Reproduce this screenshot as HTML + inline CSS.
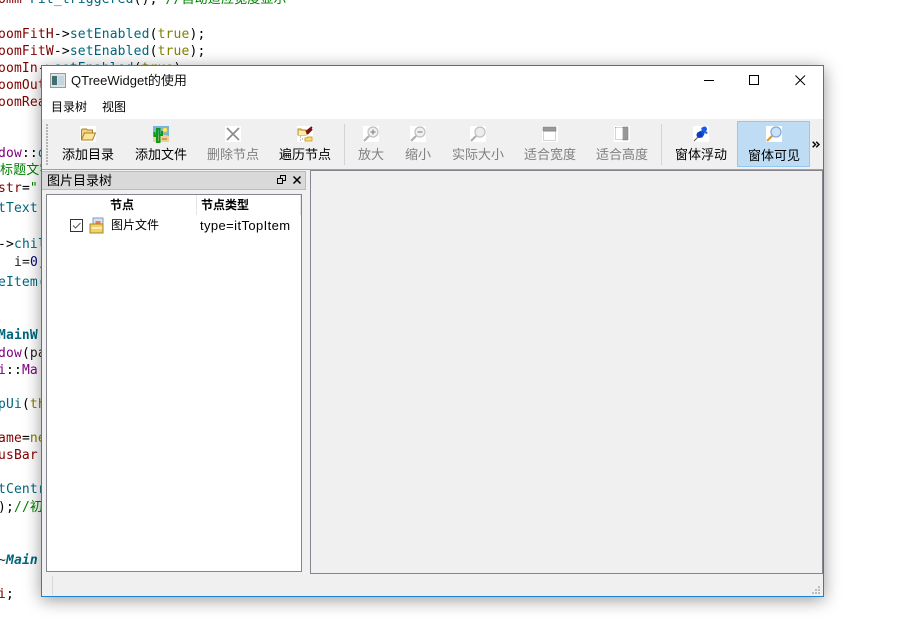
<!DOCTYPE html>
<html><head><meta charset="utf-8">
<style>
*{margin:0;padding:0;box-sizing:border-box}
html,body{width:908px;height:622px;overflow:hidden;background:#fff}
body{position:relative;font-family:"Liberation Sans","Noto Sans CJK SC",sans-serif;color:#000}
.a{position:absolute;white-space:nowrap}
.c{position:absolute;font:13px/17px "DejaVu Sans Mono","Noto Sans CJK SC",monospace;white-space:pre;left:-2px;letter-spacing:.15px;margin-top:1px}
.r{color:#800000}.t{color:#00677c}.o{color:#808000}.g{color:#008000}.p{color:#800080}.k{color:#222}
#w{position:absolute;left:41px;top:65px;width:783px;height:532px;background:#f0f0f0;border:1px solid #1c83d4;box-shadow:0 3px 16px rgba(0,0,0,.4);overflow:hidden}
.l{position:absolute;top:80px;font-size:13px;line-height:18px;transform:translateX(-50%);white-space:nowrap;color:#000}
.d{color:#7f7f7f}
svg{position:absolute;overflow:visible}
</style></head><body>
<div class="c" style="top:-10px"><span class="r">omm</span> <span class="t">Fit_triggered</span>(); <span class="g">//自动适应宽度显示</span></div>
<div class="c" style="top:25px"><span class="r">oomFitH</span>-&gt;<span class="t">setEnabled</span>(<span class="o">true</span>);</div>
<div class="c" style="top:42px"><span class="r">oomFitW</span>-&gt;<span class="t">setEnabled</span>(<span class="o">true</span>);</div>
<div class="c" style="top:59px"><span class="r">oomIn</span>-&gt;<span class="t">setEnabled</span>(<span class="o">true</span>);</div>
<div class="c" style="top:76px"><span class="r">oomOut</span></div>
<div class="c" style="top:93px"><span class="r">oomRea</span></div>
<div class="c" style="top:144px"><span class="p">dow</span>::<span class="t">on</span></div>
<div class="c g" style="top:161px;left:0">标题文字</div>
<div class="c" style="top:179px"><span class="r">str</span>=<span class="g">"</span></div>
<div class="c t" style="top:199px">tText</div>
<div class="c" style="top:235px">-&gt;<span class="t">chil</span></div>
<div class="c" style="top:253px">  <span class="k">i=</span><span style="color:#000080">0</span>;</div>
<div class="c t" style="top:273px">eItem(</div>
<div class="c t" style="top:326px;font-weight:bold">MainW</div>
<div class="c" style="top:344px"><span class="p">dow</span>(<span class="k">pa</span></div>
<div class="c" style="top:361px"><span class="p">i</span>::<span class="p">Ma</span></div>
<div class="c" style="top:395px"><span class="t">pUi</span>(<span class="o">th</span></div>
<div class="c" style="top:429px"><span class="r">ame</span>=<span class="o">ne</span></div>
<div class="c r" style="top:446px">usBar</div>
<div class="c t" style="top:480px">tCentr</div>
<div class="c" style="top:498px">);<span class="g">//初</span></div>
<div class="c t" style="top:551px;font-weight:bold;font-style:italic"><span class="k" style="font-weight:normal;font-style:normal">~</span>Main</div>
<div class="c" style="top:585px"><span class="r">i</span>;</div>

<div id="w">
<div class="a" style="left:0;top:0;width:781px;height:53px;background:#fff"></div>
<svg style="left:8px;top:7px" width="16" height="15"><rect x=".5" y=".5" width="15" height="14" fill="#dfe3e6" stroke="#9a9a9a"/><rect x="2" y="3" width="5" height="9" fill="#3f6f6f"/><rect x="8" y="3" width="6" height="9" fill="#c4d4e0"/></svg>
<div class="a" style="left:29px;top:6px;font-size:13px;line-height:18px;color:#111">QTreeWidget的使用</div>
<div class="a" style="left:9px;top:33px;font-size:12px;line-height:17px">目录树</div>
<div class="a" style="left:60px;top:33px;font-size:12px;line-height:17px">视图</div>
<svg style="left:662px;top:14px" width="12" height="2"><rect width="10" height="1" fill="#000"/></svg>
<svg style="left:707px;top:9px" width="12" height="12"><rect x=".5" y=".5" width="9" height="9" fill="none" stroke="#000"/></svg>
<svg style="left:753px;top:9px" width="12" height="12"><path d="M.5.5l9.5 9.5M10 .5L.5 10" stroke="#000" fill="none"/></svg>

<div class="a" style="left:0;top:103px;width:781px;height:1px;background:#a0a0a0"></div>
<div class="a" style="left:4px;top:58px;width:2px;height:41px;background:repeating-linear-gradient(#b4b4b4 0 2px,transparent 2px 3px)"></div>
<div class="a" style="left:302px;top:58px;width:1px;height:41px;background:#d4d4d4"></div>
<div class="a" style="left:619px;top:58px;width:1px;height:41px;background:#d4d4d4"></div>
<div class="a" style="left:695px;top:55px;width:73px;height:46px;background:#bedcf3;border:1px solid #96c8ef"></div>

<!-- folder -->
<svg style="left:38px;top:60px" width="16" height="16"><rect width="16" height="16" fill="#fff"/><path d="M1.500 13V4l1-1h4l1 1h5v4" fill="#f2d27c" stroke="#a8802c"/><path d="M1.500 14l3-7h11l-3 7z" fill="#fbe39a" stroke="#a8802c"/></svg>
<!-- cactus -->
<svg style="left:111px;top:60px" width="16" height="16"><rect width="16" height="16" fill="#78b4dc"/><path d="M0 10q8-3 16 0v6H0z" fill="#f0d090"/><circle cx="12" cy="4" r="2.400" fill="#ffe860" stroke="#e8b020" stroke-width=".6"/><path d="M4 16V3h2.500v13zM1.500 6v4h3M9 5v4H5.500" fill="none" stroke="#0c9a1c" stroke-width="2"/><path d="M9 13h5" stroke="#a06c30"/></svg>
<!-- delete -->
<svg style="left:183px;top:60px" width="16" height="16"><rect width="16" height="16" fill="#fff"/><path d="M2 2l12 12M14 2L2 14" stroke="#8c8c8c" stroke-width="1.700" fill="none"/></svg>
<!-- traverse -->
<svg style="left:255px;top:60px" width="16" height="16"><rect width="16" height="16" fill="#fff"/><path d="M1 9V3h3l1 1h4v5z" fill="#f5d36c" stroke="#b08a28"/><path d="M1.500 5h7.500v4H1.500z" fill="#fdeeb0"/><path d="M9 6l6-5M10 8l5-5" stroke="#800c0c" stroke-width="2"/><path d="M8 15v-3h2l1-1h4v4z" fill="#fbdc80" stroke="#d0a030"/><path d="M3 11h1M5 13h1M3 14h1" stroke="#888"/></svg>
<!-- zoom in -->
<svg style="left:321px;top:60px" width="16" height="16"><rect width="16" height="16" fill="#fff"/><circle cx="10" cy="6" r="5" fill="#f0f0f0" stroke="#c0c0c0" stroke-width="1.200"/><path d="M6 10l-5 5" stroke="#b0b0b0" stroke-width="2.200"/><path d="M7.500 6h5M10 3.500v5" stroke="#888" stroke-width="1.200"/></svg>
<svg style="left:368px;top:60px" width="16" height="16"><rect width="16" height="16" fill="#fff"/><circle cx="10" cy="6" r="5" fill="#f0f0f0" stroke="#c0c0c0" stroke-width="1.200"/><path d="M6 10l-5 5" stroke="#b0b0b0" stroke-width="2.200"/><path d="M7.500 6h5" stroke="#888" stroke-width="1.200"/></svg>
<svg style="left:428px;top:60px" width="16" height="16"><rect width="16" height="16" fill="#fff"/><circle cx="10" cy="6" r="5" fill="#ececec" stroke="#c0c0c0" stroke-width="1.200"/><path d="M6 10l-5 5" stroke="#b0b0b0" stroke-width="2.200"/></svg>
<!-- fit w -->
<svg style="left:500px;top:60px" width="16" height="16"><rect width="16" height="16" fill="#fff"/><rect x="1" y="1" width="13" height="4" fill="#999" stroke="#777" stroke-width=".5"/><rect x="1.500" y="5.500" width="12" height="9" fill="none" stroke="#aaa" stroke-dasharray="1 1"/></svg>
<!-- fit h -->
<svg style="left:572px;top:60px" width="16" height="16"><rect width="16" height="16" fill="#fff"/><rect x="9" y="1" width="5" height="13" fill="#999" stroke="#777" stroke-width=".5"/><rect x="1.500" y="1.500" width="7.500" height="12" fill="none" stroke="#aaa" stroke-dasharray="1 1"/></svg>
<!-- pin -->
<svg style="left:651px;top:60px" width="16" height="16"><rect width="16" height="16" fill="#fff"/><path d="M1 15l5-5" stroke="#666" stroke-width="1.200"/><path d="M4 7l5 5 2-3 1-3-2-2-3 1z" fill="#1450d8"/><path d="M9 1l6 6-2 1-5-5z" fill="#2068f0"/><circle cx="11.500" cy="3" r="2.500" fill="#1a5ce8"/><circle cx="6.500" cy="9" r="3" fill="#0c3cb8"/></svg>
<!-- visible -->
<svg style="left:724px;top:60px" width="16" height="16"><rect width="16" height="16" fill="#fff"/><circle cx="10" cy="6" r="5" fill="#c8e4fa" stroke="#8aa8d8" stroke-width="1.300"/><path d="M6 10l-5 5" stroke="#d89a40" stroke-width="2.200"/></svg>

<div class="l" style="left:46px">添加目录</div>
<div class="l" style="left:119px">添加文件</div>
<div class="l d" style="left:191px">删除节点</div>
<div class="l" style="left:263px">遍历节点</div>
<div class="l d" style="left:329px">放大</div>
<div class="l d" style="left:376px">缩小</div>
<div class="l d" style="left:436px">实际大小</div>
<div class="l d" style="left:508px">适合宽度</div>
<div class="l d" style="left:580px">适合高度</div>
<div class="l" style="left:659px">窗体浮动</div>
<div class="l" style="left:732px;top:81px">窗体可见</div>
<svg style="left:770px;top:75px" width="8" height="7"><path d="M.7.700L3.500 3.500.7 6.300M4.200.700L7 3.500 4.200 6.300" fill="none" stroke="#000" stroke-width="1.400"/></svg>

<!-- dock -->
<div class="a" style="left:0;top:105px;width:264px;height:19px;background:#d9d9d9;border:1px solid #bcbcbc;border-left:0"></div>
<div class="a" style="left:5px;top:106px;font-size:13px;line-height:18px">图片目录树</div>
<svg style="left:235px;top:109px" width="10" height="10"><rect x="3.500" y=".5" width="5" height="5" fill="none" stroke="#000"/><rect x=".5" y="3.500" width="5" height="5" fill="#d9d9d9" stroke="#000"/></svg>
<svg style="left:251px;top:110px" width="9" height="9"><path d="M.5.500l7 7M7.500.5l-7 7" stroke="#000" stroke-width="1.500" fill="none"/></svg>
<div class="a" style="left:4px;top:128px;width:256px;height:378px;background:#fff;border:1px solid #85858d"></div>
<div class="a" style="left:68px;top:131px;font-size:12px;font-weight:bold;line-height:17px">节点</div>
<div class="a" style="left:159px;top:131px;font-size:12px;font-weight:bold;line-height:17px">节点类型</div>
<div class="a" style="left:154px;top:129px;width:1px;height:20px;background:#e5e5e5"></div>
<div class="a" style="left:258px;top:129px;width:1px;height:20px;background:#e5e5e5"></div>
<svg style="left:28px;top:153px" width="14" height="14"><rect x=".5" y=".5" width="12" height="12" fill="#fff" stroke="#333"/><path d="M3 6.500l2.500 2.500 5-5" stroke="#555" fill="none"/></svg>
<svg style="left:47px;top:152px" width="16" height="16"><rect x="4" y="0" width="10" height="10" fill="#d8e4f0" stroke="#8a9ab0"/><rect x="6.500" y="3" width="5" height="5" fill="#ee7a60"/><path d="M1 15V6h13v9z" fill="#f4d068" stroke="#a88428"/><rect x="3" y="9" width="10" height="2" fill="#fdf0b4"/></svg>
<div class="a" style="left:69px;top:151px;font-size:12px;line-height:17px">图片文件</div>
<div class="a" style="left:158px;top:151px;font-size:13px;line-height:17px;letter-spacing:.4px">type=itTopItem</div>

<!-- central -->
<div class="a" style="left:268px;top:104px;width:513px;height:404px;background:#f0f0f0;border:1px solid #85858d"></div>
<div class="a" style="left:10px;top:510px;width:1px;height:19px;background:#d8d8d8"></div>
<svg style="left:769px;top:519px" width="10" height="10" fill="#bdbdbd"><rect x="7" y="1" width="2" height="2"/><rect x="4" y="4" width="2" height="2"/><rect x="7" y="4" width="2" height="2"/><rect x="1" y="7" width="2" height="2"/><rect x="4" y="7" width="2" height="2"/><rect x="7" y="7" width="2" height="2"/></svg>
</div>
</body></html>
